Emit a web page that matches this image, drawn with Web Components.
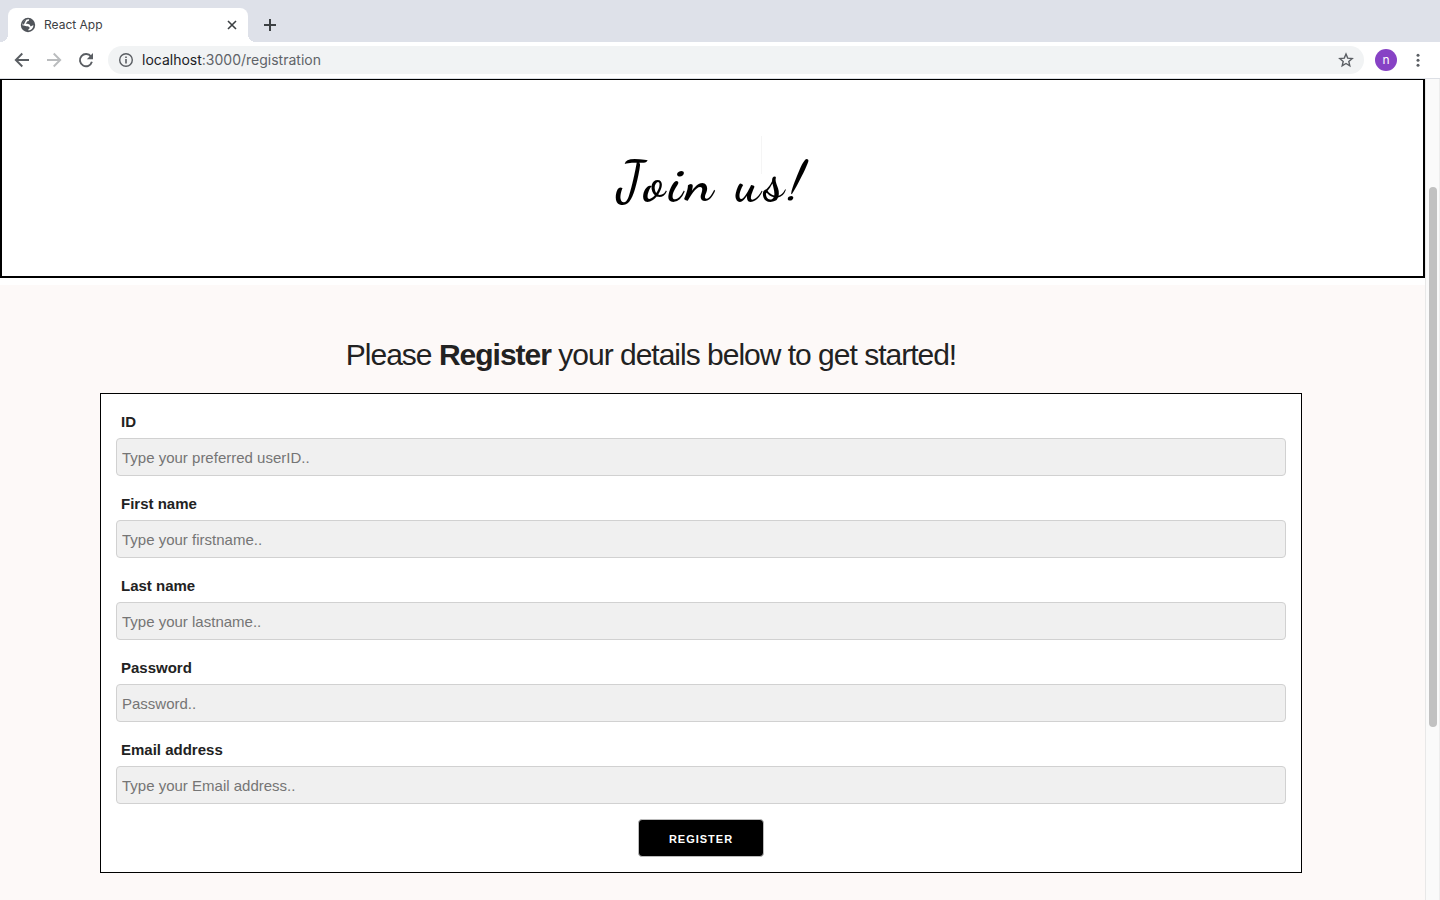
<!DOCTYPE html>
<html lang="en">
<head>
<meta charset="utf-8">
<title>React App</title>
<style>
html, body { margin: 0; height: 100%; }
body { font-family: "Liberation Sans", Arial, sans-serif; color: #222; background: #fff; overflow: hidden; }
</style>
</head>
<body>
<browser-window>
  <tab-strip slot="tabs"><browser-tab>React App</browser-tab></tab-strip>
  <address-bar slot="toolbar" host="localhost" path=":3000/registration" profile="n"></address-bar>
  <page-banner>Join us!</page-banner>
  <registration-section>
    <span slot="heading">Please <strong>Register</strong> your details below to get started!</span>
    <form-field label="ID" placeholder="Type your preferred userID.."></form-field>
    <form-field label="First name" placeholder="Type your firstname.."></form-field>
    <form-field label="Last name" placeholder="Type your lastname.."></form-field>
    <form-field label="Password" type="password" placeholder="Password.."></form-field>
    <form-field label="Email address" type="email" placeholder="Type your Email address.."></form-field>
    <submit-button slot="actions">Register</submit-button>
  </registration-section>
</browser-window>

<script>
const define = (name, html, setup) => customElements.define(name, class extends HTMLElement {
  constructor() {
    super();
    const template = document.createElement('template');
    template.innerHTML = html;
    this.attachShadow({ mode: 'open' }).append(template.content.cloneNode(true));
  }
  connectedCallback() { if (setup) setup(this, this.shadowRoot); }
});

const iconButton = `
  button { display: grid; place-items: center; padding: 0; border: 0; background: none; color: #5a5e63; font: inherit; }
  svg { display: block; }`;

define('browser-window', `
<style>
  :host { display: flex; flex-direction: column; height: 100vh; }
  header { flex: none; border-bottom: 1px solid #dcdfe5; }
  .view { flex: 1; min-height: 0; display: flex; }
  main { flex: 1; min-width: 0; overflow: hidden; display: flex; flex-direction: column; }
</style>
<header><slot name="tabs"></slot><slot name="toolbar"></slot></header>
<div class="view"><main><slot></slot></main><scroll-track></scroll-track></div>`);

define('scroll-track', `
<style>
  :host { display: grid; grid-template-rows: 108fr 540fr 173fr; justify-items: center; box-sizing: border-box; width: 15px; background: #fafafa; border-left: 1px solid #e8e8e8; border-right: 1px solid #ededed; }
  .thumb { grid-row: 2; width: 8px; border-radius: 4px; background: #c1c1c1; }
</style>
<div class="thumb"></div>`);

define('tab-strip', `
<style>
  :host { display: flex; align-items: flex-end; height: 42px; padding: 0 8px; box-sizing: border-box; background: #dee1e9; }
  ${iconButton}
  button { width: 28px; height: 34px; margin-left: 8px; color: #3c4043; }
</style>
<slot></slot>
<button aria-label="New tab"><svg width="14" height="14" viewBox="0 0 14 14"><path d="M7 1v12M1 7h12" stroke="currentColor" stroke-width="2"/></svg></button>`);

define('browser-tab', `
<style>
  :host { position: relative; display: flex; align-items: center; gap: 8px; box-sizing: border-box; width: 240px; height: 34px; padding: 0 8px 0 12px; border-radius: 8px 8px 0 0; background: #fff; color: #3c4043; font: 12px/16px Inter, sans-serif; }
  :host::before, :host::after { content: ""; position: absolute; bottom: 0; width: 8px; height: 8px; }
  :host::before { right: 100%; background: radial-gradient(circle at 0 0, transparent 8px, #fff 8px); }
  :host::after { left: 100%; background: radial-gradient(circle at 100% 0, transparent 8px, #fff 8px); }
  .title { flex: 1; }
  ${iconButton}
  button { width: 16px; height: 16px; color: #3c4043; }
</style>
<svg width="16" height="16" viewBox="0 0 16 16"><circle cx="8" cy="8" r="7.200" fill="#50545a"/><path d="M9.200 2.400C8.900 3.800 8.300 4.300 7.200 4.300c-.1 1-.7 1.500-1.500 1.800.3.700 1 .9 2.400.9 1.500.1 2.200 1 2.200 2.200 1.200.1 1.900-.8 3.200-1-.2 2.800-2.300 5.100-5.100 5.400v-1.300c.8-.4 1.200-.9 1.200-1.900-.7-.7-1.500-1.100-3-1.200C5.100 9.100 4.400 8.300 2.400 8.200 2.400 5 5.600 2 9.200 2.400z" fill="#fff"/><path d="M2.500 7.200C2.700 5 4.400 3 6.500 2.500L5.300 4.600 3.900 7.500z" fill="#50545a"/></svg>
<span class="title"><slot></slot></span>
<button aria-label="Close tab"><svg width="10" height="10" viewBox="0 0 10 10"><path d="M1 1l8 8M9 1l-8 8" stroke="currentColor" stroke-width="1.600"/></svg></button>`);

define('address-bar', `
<style>
  :host { display: flex; align-items: center; height: 36px; padding: 0 15px 0 8px; box-sizing: border-box; background: #fff; }
  ${iconButton}
  button { width: 28px; height: 28px; }
  nav { display: flex; gap: 4px; margin-right: 8px; }
  .forward { color: #babcbe; }
  .box { flex: 1; display: flex; align-items: center; box-sizing: border-box; height: 28px; padding: 0 4px 0 10px; border-radius: 14px; background: #f1f3f4; font: 14px/20px Inter, sans-serif; color: #5f6368; }
  .url { flex: 1; margin-left: 8px; }
  .host { color: #202124; }
  .box .info { width: 16px; height: 28px; }
  .avatar { width: 22px; height: 22px; margin: 0 14px 0 11px; border-radius: 50%; background: #8742c5; color: #fff; font: 12px/22px Inter, sans-serif; }
  .menu { width: 14px; }
</style>
<nav>
  <button aria-label="Back"><svg width="16" height="16" viewBox="0 0 16 16" fill="none" stroke="currentColor" stroke-width="1.900"><path d="M15 8H2.500M8.300 1.500L1.800 8l6.500 6.500"/></svg></button>
  <button class="forward" aria-label="Forward"><svg width="16" height="16" viewBox="0 0 16 16" fill="none" stroke="currentColor" stroke-width="1.900"><path d="M1 8h12.500M7.700 1.500L14.200 8l-6.500 6.500"/></svg></button>
  <button aria-label="Reload"><svg width="16" height="16" viewBox="0 0 16 16"><path d="M13 4.600A6.100 6.100 0 1 0 13.900 9.800" fill="none" stroke="currentColor" stroke-width="1.900"/><path d="M15 1v6.200H8.800z" fill="currentColor"/></svg></button>
</nav>
<div class="box">
  <button class="info" aria-label="Site information"><svg width="16" height="16" viewBox="0 0 16 16"><circle cx="8" cy="8" r="6.300" fill="none" stroke="currentColor" stroke-width="1.400"/><path d="M7.200 7h1.600v4.400H7.200zM7.200 4.500h1.600V6H7.200z" fill="currentColor"/></svg></button>
  <span class="url"><span class="host"></span><span class="path"></span></span>
  <button aria-label="Bookmark this page"><svg width="16" height="16" viewBox="0 0 16 16"><path d="M8 2l1.700 4.100 4.500.4-3.400 2.900 1 4.400L8 11.500l-3.800 2.300 1-4.400L1.800 6.500l4.500-.4z" fill="none" stroke="currentColor" stroke-width="1.400"/></svg></button>
</div>
<button class="avatar" aria-label="Profile"></button>
<button class="menu" aria-label="Menu"><svg width="4" height="16" viewBox="0 0 4 16" fill="currentColor"><circle cx="2" cy="3.300" r="1.500"/><circle cx="2" cy="8.300" r="1.500"/><circle cx="2" cy="13.300" r="1.500"/></svg></button>`,
(el, root) => {
  root.querySelector('.host').textContent = el.getAttribute('host');
  root.querySelector('.path').textContent = el.getAttribute('path');
  root.querySelector('.avatar').textContent = el.getAttribute('profile');
});

define('page-banner', `
<style>
  :host { position: relative; flex: none; display: block; padding: 66px 0 58px; border: 2px solid #000; border-top-width: 1px; text-align: center; color: #000; background: #fff; }
  h1 { margin: 0; font: 700 56px/72px "Dancing Script", "Liberation Serif", serif; letter-spacing: 4px; }
  :host::after { content: ""; position: absolute; top: 56px; left: calc(50% + 48px); width: 1px; height: 38px; background: #f5f5f5; }
</style>
<h1><slot></slot></h1>`);

define('registration-section', `
<style>
  :host { flex: 1 0 auto; display: block; margin-top: 7px; padding: 50px 123px 27px 0; background: #fdf9f8; }
  h2 { margin: 0 0 18px; font-size: 30px; line-height: 40px; font-weight: 400; letter-spacing: -1px; text-align: center; }
  form { display: flex; flex-direction: column; gap: 15px; margin-left: 100px; padding: 15px; border: 1px solid #000; background: #fff; }
</style>
<h2><slot name="heading"></slot></h2>
<form><slot></slot><slot name="actions"></slot></form>`);

define('form-field', `
<style>
  :host { display: block; font-size: 15px; line-height: 24px; }
  label { display: block; margin-bottom: 3px; padding-left: 5px; font-weight: 700; line-height: 26px; }
  input { display: block; box-sizing: border-box; width: 100%; height: 38px; padding: 0 5px; border: 1px solid #d1d1d1; border-radius: 4px; background: #f0f0f0; color: #222; font: inherit; }
  input::placeholder { color: #757575; }
</style>
<label for="field"></label><input id="field">`,
(el, root) => {
  const input = root.querySelector('input');
  root.querySelector('label').textContent = el.getAttribute('label');
  input.type = el.getAttribute('type') || 'text';
  input.placeholder = el.getAttribute('placeholder');
});

define('submit-button', `
<style>
  :host { display: block; text-align: center; }
  button { display: inline-block; vertical-align: top; box-sizing: border-box; height: 38px; padding: 2px 30px 0; border: 1px solid #bbb; border-radius: 4px; background: #000; color: #fff; font: 700 11px/34px "Liberation Sans", Arial, sans-serif; letter-spacing: 1px; text-transform: uppercase; }
</style>
<button type="submit"><slot></slot></button>`);
</script>
</body>
</html>
